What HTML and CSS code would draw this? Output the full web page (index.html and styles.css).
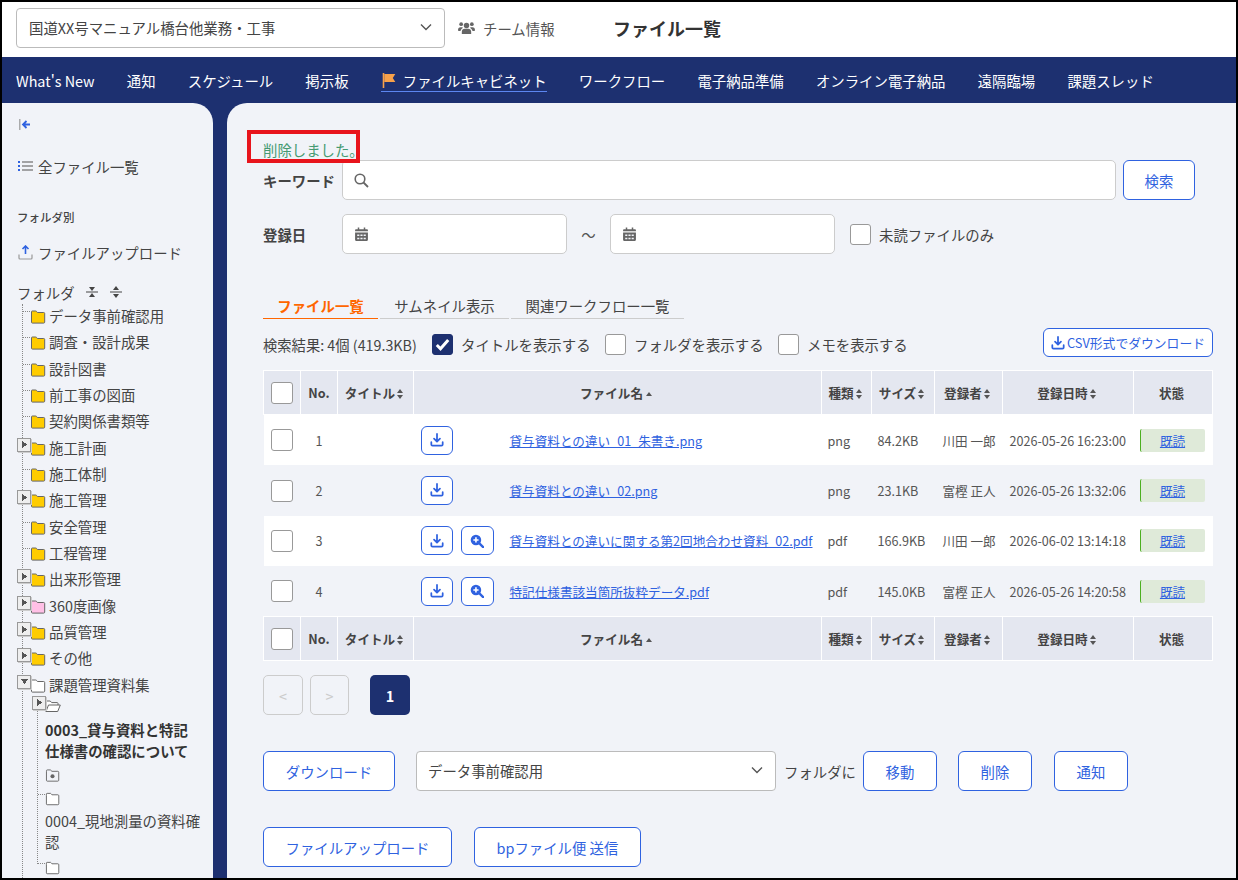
FILE: index.html
```html
<!DOCTYPE html>
<html lang="ja">
  <head>
    <meta charset="UTF-8" />
    <meta name="viewport" content="width=device-width, initial-scale=1.0" />
    <title>ファイル一覧</title>
    <link rel="stylesheet" href="styles.css">
  </head>
  <body>
    <svg class="defs" width="0" height="0">
      <symbol id="i-folder" viewBox="0 0 16 14"><path d="M1.5 3V1.8c0-.5.3-.8.8-.8h3.4c.4 0 .6.1.8.4l.9 1.1h6.3c.6 0 1 .4 1 1v8.6c0 .6-.4 1-1 1H2.3c-.5 0-.8-.4-.8-.9z" stroke="#666" stroke-width="1" /></symbol>
      <symbol id="i-sort" viewBox="0 0 6 10"><path d="M3 0l3 4H0zM3 10L0 6h6z" fill="#555" /></symbol>
      <symbol id="i-down" viewBox="0 0 16 16"><path d="M8 1v8.5M4.6 6.4L8 9.8l3.4-3.4" fill="none" stroke="#2f62e0" stroke-width="2" stroke-linecap="round" stroke-linejoin="round" /><path d="M1.5 10.5v2.6c0 .8.6 1.4 1.4 1.4h10.2c.8 0 1.4-.6 1.4-1.4v-2.6" fill="none" stroke="#2f62e0" stroke-width="2" stroke-linecap="round" /></symbol>
      <symbol id="i-zoom" viewBox="0 0 16 16"><circle cx="6.8" cy="6.8" r="6" fill="#2f62e0" /><path d="M6.8 3.8v6M3.8 6.8h6" stroke="#fff" stroke-width="1.8" /><path d="M11 11l4 4" stroke="#2f62e0" stroke-width="2.6" stroke-linecap="round" /></symbol>
      <symbol id="i-cal" viewBox="0 0 14 14"><path d="M1 4V3c0-.6.4-1 1-1h10c.6 0 1 .4 1 1v1zM1 5.2h12V12c0 .6-.4 1-1 1H2c-.6 0-1-.4-1-1zM3.5.5h1.4V3H3.500zM9.100.5h1.400V3H9.100z" fill="#666" /><path d="M3 7h2v1.500H3zM6 7h2v1.500H6zM9 7h2v1.500H9zM3 10h2v1.500H3zM6 10h2v1.500H6zM9 10h2v1.500H9z" fill="#f1f3f8" /></symbol>
      <symbol id="i-chev" viewBox="0 0 12 8"><path d="M1 1.500l5 5 5-5" fill="none" stroke="#555" stroke-width="1.400" /></symbol>
    </svg>

    <div class="page">
      <header class="topbar">
        <div class="select project-select">
          <span>国道XX号マニュアル橋台他業務・工事</span>
          <svg class="chev"><use href="#i-chev" /></svg>
        </div>
        <a class="team">
          <svg width="17" height="14" viewBox="0 0 20 16"><circle cx="10" cy="5" r="3.200" fill="#666" /><circle cx="3.700" cy="3.500" r="2.200" fill="#666" /><circle cx="16.300" cy="3.500" r="2.200" fill="#666" /><path d="M4.500 15v-2.500c0-2 1.500-3.500 3.500-3.500h4c2 0 3.500 1.500 3.500 3.500V15zM0 10.500C0 8.500 1 7 3 7h2.500c.3 1-.5 1-1.800 2.800-.4.500-.6 1.100-.7 1.700H1c-.6 0-1-.4-1-1zM20 10.500C20 8.500 19 7 17 7h-2.500c-.3 1 .5 1 1.800 2.800.4.500.6 1.100.7 1.700H19c.6 0 1-.4 1-1z" fill="#666" /></svg>
          チーム情報
        </a>
        <h1 class="page-title">ファイル一覧</h1>
      </header>

      <nav class="nav">
        <a>What's New</a>
        <a>通知</a>
        <a>スケジュール</a>
        <a>掲示板</a>
        <a class="current">
          <svg width="14" height="15" viewBox="0 0 14 15"><path d="M1.500 0v15" stroke="#f7a14a" stroke-width="1.600" /><path d="M2.300 1h11l-2.500 4 2.500 4h-11z" fill="#f7a14a" /></svg>
          ファイルキャビネット
        </a>
        <a>ワークフロー</a>
        <a>電子納品準備</a>
        <a>オンライン電子納品</a>
        <a>遠隔臨場</a>
        <a>課題スレッド</a>
      </nav>

      <div class="body">
        <aside class="side">
          <svg class="collapse" width="12" height="11" viewBox="0 0 12 11"><path d="M.800 0v11" stroke="#999" stroke-width="1.200" /><path d="M11 5.500H4.500M7.500 2L4 5.500 7.500 9" fill="none" stroke="#2f62e0" stroke-width="1.800" /></svg>
          <a class="side-link all-files">
            <svg width="15" height="12" viewBox="0 0 15 12"><path d="M0 1h2v2H0zM0 5h2v2H0zM0 9h2v2H0z" fill="#2f62e0" /><path d="M4 2h11M4 6h11M4 10h11" stroke="#888" stroke-width="1.300" /></svg>
            全ファイル一覧
          </a>
          <div class="side-caption">フォルダ別</div>
          <a class="side-link upload">
            <svg width="15" height="15" viewBox="0 0 15 15"><path d="M7.500 1v8M4.500 4l3-3 3 3" fill="none" stroke="#2f62e0" stroke-width="1.600" /><path d="M1 9.500V13c0 .6.400 1 1 1h11c.6 0 1-.4 1-1V9.500" fill="none" stroke="#999" stroke-width="1.200" /></svg>
            ファイルアップロード
          </a>
          <div class="folder-head">
            フォルダ
            <svg width="12" height="14" viewBox="0 0 12 14"><path d="M0 7h12" stroke="#444" /><path d="M6 6L3 2h6zM6 8l3 4H3z" fill="#444" /></svg>
            <svg width="12" height="14" viewBox="0 0 12 14"><path d="M0 7h12" stroke="#444" /><path d="M6 1l3 4H3zM6 13l-3-4h6z" fill="#444" /></svg>
          </div>
          <ul class="tree">
            <li><svg class="fd yellow"><use href="#i-folder" /></svg>データ事前確認用</li>
            <li><svg class="fd yellow"><use href="#i-folder" /></svg>調査・設計成果</li>
            <li><svg class="fd yellow"><use href="#i-folder" /></svg>設計図書</li>
            <li><svg class="fd yellow"><use href="#i-folder" /></svg>前工事の図面</li>
            <li><svg class="fd yellow"><use href="#i-folder" /></svg>契約関係書類等</li>
            <li class="has-kids"><svg class="fd yellow"><use href="#i-folder" /></svg>施工計画</li>
            <li><svg class="fd yellow"><use href="#i-folder" /></svg>施工体制</li>
            <li class="has-kids"><svg class="fd yellow"><use href="#i-folder" /></svg>施工管理</li>
            <li><svg class="fd yellow"><use href="#i-folder" /></svg>安全管理</li>
            <li><svg class="fd yellow"><use href="#i-folder" /></svg>工程管理</li>
            <li class="has-kids"><svg class="fd yellow"><use href="#i-folder" /></svg>出来形管理</li>
            <li class="has-kids"><svg class="fd pink"><use href="#i-folder" /></svg>360度画像</li>
            <li class="has-kids"><svg class="fd yellow"><use href="#i-folder" /></svg>品質管理</li>
            <li class="has-kids"><svg class="fd yellow"><use href="#i-folder" /></svg>その他</li>
            <li class="has-kids open"><svg class="fd white"><use href="#i-folder" /></svg>課題管理資料集
              <ul class="subtree">
                <li class="has-kids">
                  <svg class="fd-open" width="16" height="13" viewBox="0 0 16 13"><path d="M1 11.500V1.800C1 1.300 1.300 1 1.800 1h3.400l1.500 1.600h5.500c.5 0 .8.300.8.800V5M1 11.500L3.500 5h11.800l-2.600 6.500z" fill="#fff" stroke="#666" /></svg>
                  <b>0003_貸与資料と特記仕様書の確認について</b>
                  <svg class="fd-gear" width="15" height="13" viewBox="0 0 16 14"><path d="M1.500 3V1.800c0-.5.300-.8.800-.8h3.400l1.700 1.500h6.300c.6 0 1 .4 1 1v8.600c0 .6-.4 1-1 1H2.300c-.5 0-.8-.4-.8-.9z" fill="#f1f3f8" stroke="#666" /><circle cx="8" cy="7.800" r="2.200" fill="#666" /></svg>
                </li>
                <li><svg class="fd-block white"><use href="#i-folder" /></svg>0004_現地測量の資料確認</li>
                <li><svg class="fd-block white"><use href="#i-folder" /></svg></li>
              </ul>
            </li>
          </ul>
        </aside>

        <main class="main">
          <div class="callout"></div>
          <p class="flash">削除しました。</p>

          <div class="form-row keyword-row">
            <label class="form-label">キーワード</label>
            <div class="input grow">
              <svg width="15" height="15" viewBox="0 0 15 15"><circle cx="6" cy="6" r="4.800" fill="none" stroke="#666" stroke-width="1.600" /><path d="M9.500 9.500l4.500 4.500" stroke="#666" stroke-width="1.800" /></svg>
            </div>
            <button class="btn search-btn">検索</button>
          </div>
          <div class="form-row date-row">
            <label class="form-label">登録日</label>
            <div class="input date"><svg width="15" height="15"><use href="#i-cal" /></svg></div>
            <span class="tilde">～</span>
            <div class="input date"><svg width="15" height="15"><use href="#i-cal" /></svg></div>
            <label class="check unread"><span class="box"></span>未読ファイルのみ</label>
          </div>

          <div class="tabs">
            <a class="tab active">ファイル一覧</a>
            <a class="tab t2">サムネイル表示</a>
            <a class="tab t3">関連ワークフロー一覧</a>
          </div>

          <div class="result-row">
            <span class="result-count">検索結果: 4個 (419.3KB)</span>
            <label class="check"><span class="box on"><svg width="15" height="13" viewBox="0 0 15 13"><path d="M1.800 7l3.700 3.700L13.200 2" fill="none" stroke="#fff" stroke-width="3" /></svg></span>タイトルを表示する</label>
            <label class="check"><span class="box"></span>フォルダを表示する</label>
            <label class="check"><span class="box"></span>メモを表示する</label>
            <button class="btn csv-btn"><svg width="14" height="14"><use href="#i-down" /></svg>CSV形式でダウンロード</button>
          </div>

          <table class="files">
            <colgroup>
              <col class="c-check" /><col class="c-no" /><col class="c-title" /><col class="c-name" /><col class="c-type" /><col class="c-size" /><col class="c-user" /><col class="c-date" /><col class="c-state" />
            </colgroup>
            <thead>
              <tr>
                <th><span class="box"></span></th>
                <th>No.</th>
                <th>タイトル<svg class="sort"><use href="#i-sort" /></svg></th>
                <th>ファイル名<span class="sort-up"></span></th>
                <th>種類<svg class="sort"><use href="#i-sort" /></svg></th>
                <th>サイズ<svg class="sort"><use href="#i-sort" /></svg></th>
                <th>登録者<svg class="sort"><use href="#i-sort" /></svg></th>
                <th>登録日時<svg class="sort"><use href="#i-sort" /></svg></th>
                <th>状態</th>
              </tr>
            </thead>
            <tbody>
              <tr>
                <td class="center"><span class="box"></span></td>
                <td class="center">1</td>
                <td></td>
                <td class="name-cell">
                  <div class="file-cell">
                    <span class="file-btns"><button class="icon-btn dl"><svg width="14" height="14"><use href="#i-down" /></svg></button></span>
                    <a class="link">貸与資料との違い_01_朱書き.png</a>
                  </div>
                </td>
                <td>png</td><td>84.2KB</td><td>川田 一郎</td><td>2026-05-26 16:23:00</td>
                <td><div class="state"><a class="link">既読</a></div></td>
              </tr>
              <tr>
                <td class="center"><span class="box"></span></td>
                <td class="center">2</td>
                <td></td>
                <td class="name-cell">
                  <div class="file-cell">
                    <span class="file-btns"><button class="icon-btn dl"><svg width="14" height="14"><use href="#i-down" /></svg></button></span>
                    <a class="link">貸与資料との違い_02.png</a>
                  </div>
                </td>
                <td>png</td><td>23.1KB</td><td>富樫 正人</td><td>2026-05-26 13:32:06</td>
                <td><div class="state"><a class="link">既読</a></div></td>
              </tr>
              <tr>
                <td class="center"><span class="box"></span></td>
                <td class="center">3</td>
                <td></td>
                <td class="name-cell">
                  <div class="file-cell">
                    <span class="file-btns"><button class="icon-btn dl"><svg width="14" height="14"><use href="#i-down" /></svg></button><button class="icon-btn zm"><svg width="14" height="14"><use href="#i-zoom" /></svg></button></span>
                    <a class="link">貸与資料との違いに関する第2回地合わせ資料_02.pdf</a>
                  </div>
                </td>
                <td>pdf</td><td>166.9KB</td><td>川田 一郎</td><td>2026-06-02 13:14:18</td>
                <td><div class="state"><a class="link">既読</a></div></td>
              </tr>
              <tr>
                <td class="center"><span class="box"></span></td>
                <td class="center">4</td>
                <td></td>
                <td class="name-cell">
                  <div class="file-cell">
                    <span class="file-btns"><button class="icon-btn dl"><svg width="14" height="14"><use href="#i-down" /></svg></button><button class="icon-btn zm"><svg width="14" height="14"><use href="#i-zoom" /></svg></button></span>
                    <a class="link">特記仕様書該当箇所抜粋データ.pdf</a>
                  </div>
                </td>
                <td>pdf</td><td>145.0KB</td><td>富樫 正人</td><td>2026-05-26 14:20:58</td>
                <td><div class="state"><a class="link">既読</a></div></td>
              </tr>
            </tbody>
            <tfoot>
              <tr>
                <th><span class="box"></span></th>
                <th>No.</th>
                <th>タイトル<svg class="sort"><use href="#i-sort" /></svg></th>
                <th>ファイル名<span class="sort-up"></span></th>
                <th>種類<svg class="sort"><use href="#i-sort" /></svg></th>
                <th>サイズ<svg class="sort"><use href="#i-sort" /></svg></th>
                <th>登録者<svg class="sort"><use href="#i-sort" /></svg></th>
                <th>登録日時<svg class="sort"><use href="#i-sort" /></svg></th>
                <th>状態</th>
              </tr>
            </tfoot>
          </table>

          <div class="pager">
            <span class="page-btn off">&lt;</span>
            <span class="page-btn off">&gt;</span>
            <span class="page-btn now">1</span>
          </div>

          <div class="action-row">
            <button class="btn b-dl">ダウンロード</button>
            <div class="select folder-select">
              <span>データ事前確認用</span>
              <svg class="chev"><use href="#i-chev" /></svg>
            </div>
            <span class="folder-ni">フォルダに</span>
            <button class="btn b-move">移動</button>
            <button class="btn b-del">削除</button>
            <button class="btn b-notify">通知</button>
          </div>
          <div class="action-row second">
            <button class="btn b-up">ファイルアップロード</button>
            <button class="btn b-bp">bpファイル便 送信</button>
          </div>
        </main>
      </div>
    </div>
  </body>
</html>
```

FILE: styles.css
```css
* {
  box-sizing: border-box;
}

html,
body {
  margin: 0;
  padding: 0;
}

body {
  font-family: "Noto Sans CJK JP", "Noto Sans", sans-serif;
  font-size: 14.4px;
  color: #444;
}

.defs {
  position: absolute;
}

.page {
  width: 1238px;
  height: 880px;
  border: 2px solid #000;
  overflow: hidden;
  display: flex;
  flex-direction: column;
  background: #1d3070;
}

/* header */
.topbar {
  height: 55px;
  flex: none;
  background: #fff;
  display: flex;
  align-items: center;
  padding: 0 0 3px 14px;
}

.select {
  display: flex;
  align-items: center;
  justify-content: space-between;
  height: 40px;
  background: #fff;
  border: 1px solid #bbb;
  border-radius: 4px;
  padding: 0 12px 2px 11px;
  color: #444;
}

.chev {
  width: 12px;
  height: 8px;
}

.project-select {
  width: 429px;
  padding-left: 12px;
}

.team {
  display: flex;
  align-items: center;
  gap: 8px;
  margin-left: 13px;
  width: 155px;
  color: #555;
}

.page-title {
  margin: 0;
  font-size: 18px;
  font-weight: 700;
  color: #333;
}

.nav {
  height: 46px;
  flex: none;
  display: flex;
  align-items: center;
  gap: 32.200px;
  padding: 1px 0 0 14px;
  color: #fff;
  font-weight: 400;
}

.nav a {
  white-space: nowrap;
}

.nav .current {
  display: flex;
  align-items: center;
  gap: 7px;
  padding: 0 0 0 1px;
  height: 23px;
  border-bottom: 1px solid #5c86f0;
}

/* sidebar */
.body {
  flex: 1;
  min-height: 0;
  display: flex;
  gap: 14px;
}

.side {
  width: 211px;
  flex: none;
  background: #f1f3f8;
  border-top-right-radius: 20px;
  padding: 16px 0 0 15px;
  overflow: hidden;
}

.collapse {
  display: block;
  margin-left: 2px;
}

.side-link {
  display: flex;
  align-items: center;
  gap: 5px;
  color: #444;
}

.all-files {
  margin: 25px 0 0 1px;
  height: 22px;
}

.side-caption {
  margin-top: 32px;
  font-size: 11.500px;
  font-weight: 500;
  color: #444;
}

.upload {
  margin: 16px 0 0 1px;
  height: 22px;
}

.folder-head {
  display: flex;
  align-items: center;
  margin-top: 18px;
  height: 22px;
  gap: 11px;
  color: #444;
}

.folder-head svg + svg {
  margin-left: 1px;
}

.tree,
.subtree {
  list-style: none;
  margin: 0;
  padding: 0;
}

.tree {
  margin-left: 5px;
  border-left: 1px dotted #888;
  padding: 0 0 30px 7px;
  margin-top: 1px;
}

.tree > li {
  position: relative;
  min-height: 26.350px;
  line-height: 24px;
  white-space: nowrap;
}

.tree > li::before {
  content: "";
  position: absolute;
  left: -7px;
  top: 7px;
  width: 7px;
  border-top: 1px dotted #888;
}

/* expander box on the tree line */
.has-kids::after {
  content: "";
  position: absolute;
  width: 12px;
  height: 12px;
  left: -13px;
  top: 2px;
  border: 1px solid #999;
  box-shadow: 1px 1px 0 #ccc;
  background: conic-gradient(at 100% 50%, transparent 0 235deg, #555 235deg 305deg, transparent 305deg) center / 5px 7px no-repeat, #eee;
}

.tree > li.open::after {
  background: conic-gradient(at 50% 100%, #555 0 35deg, transparent 35deg 325deg, #555 325deg) center / 7px 5px no-repeat, #eee;
}

.fd {
  width: 16px;
  height: 14px;
  margin-right: 3px;
  vertical-align: -2px;
}

.yellow {
  fill: #ffcc00;
}

.pink {
  fill: #ffc0e6;
}

.white {
  fill: #fff;
}

.subtree {
  margin: 3px 0 0 7px;
  border-left: 1px dotted #888;
  padding-left: 7px;
  white-space: normal;
  line-height: 21px;
}

.subtree li {
  position: relative;
  width: 157px;
  color: #444;
}

.subtree li::before {
  content: "";
  position: absolute;
  left: -7px;
  top: 2px;
  width: 7px;
  border-top: 1px dotted #888;
}

.subtree .has-kids::before {
  display: none;
}

.subtree .has-kids::after {
  top: -4px;
}

.subtree li:last-child {
  height: 3px;
  margin-top: 9px;
}

.fd-open,
.fd-gear,
.fd-block {
  display: block;
}

.fd-open {
  margin-bottom: 6px;
}

.subtree b {
  display: block;
  font-weight: 700;
  color: #333;
}

.fd-gear {
  margin: 8px 0 10px;
}

.fd-block {
  width: 15px;
  height: 14px;
  margin-bottom: 4px;
}

/* main panel */
.main {
  flex: 1;
  min-width: 0;
  position: relative;
  background: #f1f3f8;
  border-top-left-radius: 20px;
  padding: 37px 23px 0 36px;
}

.callout {
  position: absolute;
  left: 20px;
  top: 27px;
  width: 113px;
  height: 33px;
  border: 4px solid #e8141c;
}

.flash {
  margin: 0;
  height: 20px;
  line-height: 20px;
  color: #459a72;
}

.form-row {
  display: flex;
  align-items: center;
}

.form-label {
  width: 79px;
  flex: none;
  font-weight: 700;
  color: #444;
}

.input {
  height: 40px;
  background: #fff;
  border: 1px solid #ccc;
  border-radius: 5px;
  display: flex;
  align-items: center;
  padding-left: 11px;
}

.grow {
  width: 774px;
}

.btn {
  height: 40px;
  background: #fff;
  border: 1px solid #2f62e0;
  border-radius: 6px;
  color: #2f62e0;
  font: inherit;
  padding: 0;
}

.search-btn {
  width: 72px;
  margin-left: 7px;
}

.date-row {
  margin-top: 14px;
}

.date {
  width: 225px;
}

.tilde {
  width: 43px;
  text-align: center;
  color: #555;
}

.check {
  display: inline-flex;
  align-items: center;
  gap: 8px;
  color: #444;
}

.box {
  display: inline-flex;
  align-items: center;
  justify-content: center;
  width: 22px;
  height: 22px;
  background: #fff;
  border: 1px solid #999;
  border-radius: 3px;
  vertical-align: middle;
}

.check .box {
  width: 21px;
  height: 21px;
}

.box.on {
  background: #1d3070;
  border-color: #1d3070;
}

.unread {
  margin-left: 15px;
}

.tabs {
  display: flex;
  gap: 2px;
  margin-top: 42px;
  height: 23px;
}

.tab {
  width: 115px;
  text-align: center;
  line-height: 19px;
  border-bottom: 1px solid #ccc;
  color: #444;
}

.tab.active {
  color: #ff6600;
  font-weight: 700;
  border-bottom: 1px solid #ff6600;
}

.t2 {
  width: 129px;
}

.t3 {
  width: 173px;
}

.result-row {
  display: flex;
  align-items: center;
  margin-top: 9px;
  height: 29px;
  padding-top: 3px;
}

.result-count {
  font-size: 14.300px;
  width: 169px;
  white-space: nowrap;
}

.result-row .check:nth-of-type(1) {
  width: 173px;
}

.result-row .check:nth-of-type(2) {
  width: 173px;
}

.csv-btn {
  margin: -3px 0 0 auto;
  align-self: flex-start;
  width: 170px;
  height: 29px;
  font-size: 12.800px;
  display: flex;
  align-items: center;
  justify-content: center;
  gap: 2px;
}

.files {
  width: 949px;
  margin-top: 13px;
  border-collapse: collapse;
  table-layout: fixed;
  font-size: 12.600px;
}

.c-check { width: 37px; }
.c-no { width: 37px; }
.c-title { width: 76px; }
.c-name { width: 408px; }
.c-type { width: 50px; }
.c-size { width: 63px; }
.c-user { width: 68px; }
.c-date { width: 131px; }
.c-state { width: 79px; }

.files th {
  height: 44px;
  background: #e4e7f0;
  border: 1px solid #fff;
  font-weight: 700;
  color: #444;
  text-align: center;
  white-space: nowrap;
  padding: 0;
}

.files th:nth-child(n+3) {
  padding-right: 3px;
}

.files td {
  height: 50.500px;
  padding: 0 0 0 7px;
  color: #555;
  white-space: nowrap;
}

.files td:nth-child(5),
.files td:nth-child(6),
.files td:nth-child(9) {
  padding-left: 6px;
}

.files td:nth-child(7) {
  padding-left: 8px;
}

.files tbody tr:nth-child(odd) td {
  background: #fff;
}

.files td.center {
  text-align: center;
  padding: 0;
}

.sort {
  width: 6px;
  height: 10px;
  margin-left: 2px;
  vertical-align: -1px;
}

.sort-up {
  display: inline-block;
  margin-left: 3px;
  border: 3px solid transparent;
  border-top: 0;
  border-bottom: 4px solid #555;
  vertical-align: 2px;
}

.file-cell {
  display: flex;
  align-items: center;
}

.file-btns {
  display: flex;
  gap: 8px;
  width: 89px;
  flex: none;
}

.icon-btn {
  height: 29px;
  background: #fff;
  border: 1px solid #2f62e0;
  border-radius: 6px;
  display: flex;
  align-items: center;
  justify-content: center;
  padding: 0;
}

.dl {
  width: 32px;
}

.zm {
  width: 33px;
}

.link {
  color: #2f62e0;
  text-decoration: underline;
}

.state {
  width: 65px;
  height: 23px;
  line-height: 23px;
  text-align: center;
  background: #dfead9;
  border-left: 1px solid #4caf20;
  border-radius: 2px;
}

.pager {
  display: flex;
  gap: 7px;
  margin-top: 14px;
}

.page-btn {
  width: 40px;
  height: 40px;
  display: flex;
  align-items: center;
  justify-content: center;
  border-radius: 5px;
  font-weight: 700;
}

.page-btn.off {
  border: 1px solid #ccc;
  color: #ccc;
  font-weight: 400;
}

.page-btn.off + .off {
  width: 39px;
}

.page-btn.now {
  margin-left: 14px;
  background: #1d3070;
  color: #fff;
}

.action-row {
  display: flex;
  align-items: center;
  margin-top: 36px;
}

.b-dl { width: 132px; }

.folder-select {
  width: 360px;
  margin-left: 21px;
}

.folder-ni {
  margin-left: 8px;
  width: 79px;
}

.b-move { width: 74px; }
.b-del { width: 74px; margin-left: 21px; }
.b-notify { width: 74px; margin-left: 22px; }
.b-up { width: 189px; }
.b-bp { width: 167px; margin-left: 22px; }
```
